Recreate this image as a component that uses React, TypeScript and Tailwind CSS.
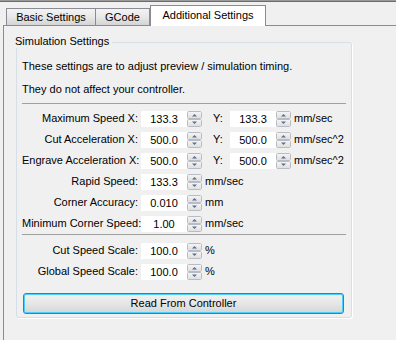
import React from 'react';

interface Row {
  label: string;
  x: string;
  y?: string;
  unit: string;
}

const MAIN_ROWS: Row[] = [
  { label: 'Maximum Speed X:', x: '133.3', y: '133.3', unit: 'mm/sec' },
  { label: 'Cut Acceleration X:', x: '500.0', y: '500.0', unit: 'mm/sec^2' },
  { label: 'Engrave Acceleration X:', x: '500.0', y: '500.0', unit: 'mm/sec^2' },
  { label: 'Rapid Speed:', x: '133.3', unit: 'mm/sec' },
  { label: 'Corner Accuracy:', x: '0.010', unit: 'mm' },
  { label: 'Minimum Corner Speed:', x: '1.00', unit: 'mm/sec' },
];

const SCALE_ROWS: Row[] = [
  { label: 'Cut Speed Scale:', x: '100.0', unit: '%' },
  { label: 'Global Speed Scale:', x: '100.0', unit: '%' },
];

function Spinner() {
  return (
    <svg width="15" height="16" viewBox="0 0 15 16" className="block shrink-0">
      <defs>
        <linearGradient id="spin" x1="0" y1="0" x2="0" y2="1">
          <stop offset="0" stopColor="#f6f6f6" />
          <stop offset="1" stopColor="#dedede" />
        </linearGradient>
      </defs>
      <rect x="0.5" y="0.5" width="14" height="7" rx="1" fill="url(#spin)" stroke="#b9bcc2" />
      <rect x="0.5" y="8.5" width="14" height="7" rx="1" fill="url(#spin)" stroke="#b9bcc2" />
      <polygon points="5,5.5 10,5.5 7.5,3" fill="#5a6f96" />
      <polygon points="5,10.5 10,10.5 7.5,13" fill="#5a6f96" />
    </svg>
  );
}

function NumField({ value }: { value: string }) {
  return (
    <div className="flex h-[16px] w-[61px] items-center bg-white">
      <span className="flex-1 text-center leading-[16px]">{value}</span>
      <Spinner />
    </div>
  );
}

function SettingRow({ row }: { row: Row }) {
  return (
    <div className="flex h-[21px] items-center">
      <span className="w-[116px] text-right whitespace-nowrap">{row.label}</span>
      <div className="ml-[3px]">
        <NumField value={row.x} />
      </div>
      {row.y && (
        <>
          <span className="ml-[11px] w-[17px]">Y:</span>
          <NumField value={row.y} />
        </>
      )}
      <span className="ml-[3px] whitespace-nowrap">{row.unit}</span>
    </div>
  );
}

export default function App() {
  return (
    <div className="flex h-[340px] w-[396px] flex-col overflow-hidden bg-[#f0f0f0] font-['Liberation_Sans',Arial,sans-serif] text-[11px] text-black">
      {/* window edge */}
      <div className="h-[1px] bg-[#9a9a9a]" />
      <div className="h-[1px] bg-[#6c6c6c]" />

      {/* Tabs */}
      <div className="flex h-[23px] items-end pl-[6px]">
        <div className="flex h-[17px] w-[90px] items-center justify-center border border-b-0 border-[#898c95] bg-gradient-to-b from-[#f3f3f3] via-[#e8e8e8] to-[#d4d4d4]">
          Basic Settings
        </div>
        <div className="flex h-[17px] w-[54px] items-center justify-center border border-b-0 border-l-0 border-[#898c95] bg-gradient-to-b from-[#f3f3f3] via-[#e8e8e8] to-[#d4d4d4]">
          GCode
        </div>
        <div className="relative z-10 -mb-px flex h-[21px] w-[116px] items-center justify-center border border-b-0 border-[#898c95] bg-white pb-[2px]">
          Additional Settings
        </div>
      </div>

      {/* Tab pane */}
      <div className="ml-[3px] flex-1 border-l border-t border-[#898c95]">
        <div className="relative ml-[12px] mt-[16px] h-[276px] w-[336px] rounded-[3px] border border-[#d5dfe5] shadow-[1px_1px_0_#ffffff]">
          <span className="absolute left-[-2px] top-[-8px] bg-[#f0f0f0] pr-[3px] leading-[13px]">
            Simulation Settings
          </span>

          <div className="flex flex-col pl-[5px] pr-[5px] pt-[17px]">
            <p className="leading-[13px]">These settings are to adjust preview / simulation timing.</p>
            <p className="mt-[10px] leading-[13px]">They do not affect your controller.</p>

            <div className="mt-[7px] h-px w-[324px] bg-[#a0a0a0]" />

            <div className="mt-[4px]">
              {MAIN_ROWS.map((r) => (
                <SettingRow key={r.label} row={r} />
              ))}
            </div>

            <div className="h-px w-[324px] bg-[#a0a0a0]" />

            <div className="mt-[5px]">
              {SCALE_ROWS.map((r) => (
                <SettingRow key={r.label} row={r} />
              ))}
            </div>

            <button className="ml-px mt-[11px] h-[21px] w-[321px] rounded-[3px] border border-[#3c7fb1] bg-gradient-to-b from-[#f2f2f2] via-[#e6e6e6] to-[#d3d6d8] leading-[17px] shadow-[inset_0_0_0_1px_#49d0fa]">
              Read From Controller
            </button>
          </div>
        </div>
      </div>
    </div>
  );
}
